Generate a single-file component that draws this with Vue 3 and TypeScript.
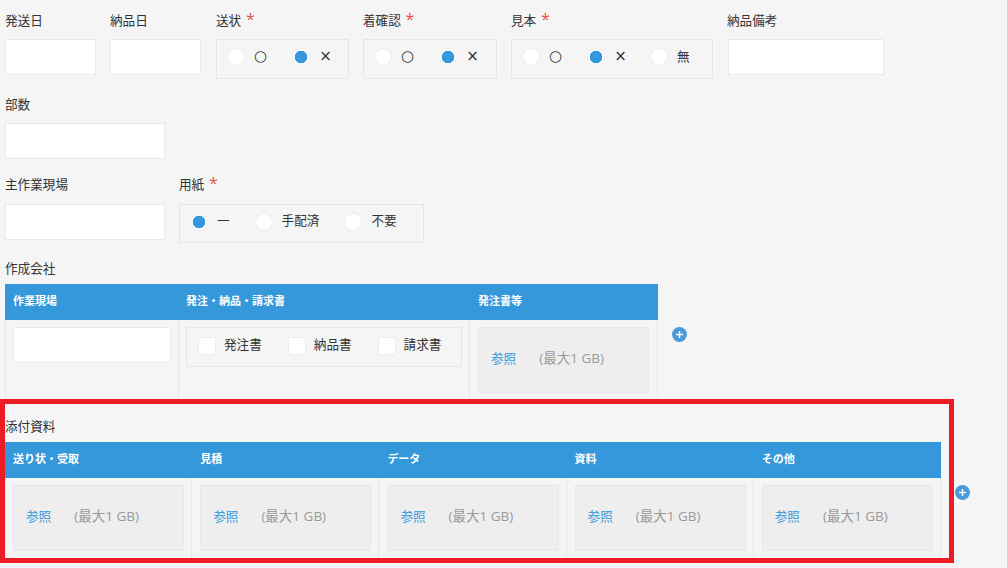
<script setup lang="ts">
interface RadioGroup {
  label: string
  name: string
  options: string[]
  selected: string
}

const topGroups: RadioGroup[] = [
  { label: '送状', name: 'r1', options: ['○', '×'], selected: '×' },
  { label: '着確認', name: 'r2', options: ['○', '×'], selected: '×' },
  { label: '見本', name: 'r3', options: ['○', '×', '無'], selected: '×' },
]
const paper = ['一', '手配済', '不要']
const docs = ['発注書', '納品書', '請求書']
const attachments = ['送り状・受取', '見積', 'データ', '資料', 'その他']
const isSymbol = (o: string): boolean => o === '○' || o === '×'
</script>

<template>
  <div class="page">
    <div class="row-top">
      <div class="field">
        <div class="label">発送日</div>
        <input class="text" type="text" />
      </div>
      <div class="field">
        <div class="label">納品日</div>
        <input class="text narrow" type="text" />
      </div>
      <div v-for="g in topGroups" :key="g.name" class="field">
        <div class="label">{{ g.label }} <span class="req">*</span></div>
        <div class="choice">
          <label v-for="o in g.options" :key="o" class="opt">
            <input class="radio" type="radio" :name="g.name" :checked="o === g.selected" />
            <span class="opt-text" :class="{ sym: isSymbol(o) }">{{ o }}</span>
          </label>
        </div>
      </div>
      <div class="field">
        <div class="label">納品備考</div>
        <input class="text" type="text" />
      </div>
    </div>

    <div class="field w160 sec-parts">
      <div class="label">部数</div>
      <input class="text" type="text" />
    </div>

    <div class="row-site">
      <div class="field w160">
        <div class="label lower">主作業現場</div>
        <input class="text" type="text" />
      </div>
      <div class="field w245">
        <div class="label lower">用紙 <span class="req">*</span></div>
        <div class="choice paper">
          <label v-for="o in paper" :key="o" class="opt">
            <input class="radio" type="radio" name="paper" :checked="o === '一'" />
            <span class="opt-text">{{ o }}</span>
          </label>
        </div>
      </div>
    </div>

    <div class="label section-label first">作成会社</div>
    <div class="table-row">
      <div class="table t1">
        <div class="th">作業現場</div>
        <div class="th">発注・納品・請求書</div>
        <div class="th">発注書等</div>
        <div class="td first-col"><input class="text" type="text" /></div>
        <div class="td mid-col">
          <div class="choice checks">
            <label v-for="d in docs" :key="d" class="opt">
              <input class="check" type="checkbox" />
              <span class="opt-text">{{ d }}</span>
            </label>
          </div>
        </div>
        <div class="td last-col">
          <div class="file"><a class="browse">参照</a><span class="limit">(最大1 GB)</span></div>
        </div>
      </div>
      <button class="plus" type="button" aria-label="追加">
        <svg viewBox="0 0 15 15" width="15" height="15"><circle cx="7.5" cy="7.5" r="7.5" fill="#4a9ad8" /><path d="M7.5 4v7M4 7.5h7" stroke="#fff" stroke-width="1.4" /></svg>
      </button>
    </div>

    <div class="label section-label second">添付資料</div>
    <div class="table-row">
      <div class="table t2">
        <div v-for="a in attachments" :key="a" class="th">{{ a }}</div>
        <div v-for="(a, i) in attachments" :key="a + 'c'" class="td" :class="{ 'first-col': i === 0 }">
          <div class="file"><a class="browse">参照</a><span class="limit">(最大1 GB)</span></div>
        </div>
      </div>
      <button class="plus" type="button" aria-label="追加">
        <svg viewBox="0 0 15 15" width="15" height="15"><circle cx="7.5" cy="7.5" r="7.5" fill="#4a9ad8" /><path d="M7.5 4v7M4 7.5h7" stroke="#fff" stroke-width="1.4" /></svg>
      </button>
    </div>

    <div class="highlight"></div>
  </div>
</template>

<style>
html,
body {
  margin: 0;
  background: #f5f5f5;
}
</style>

<style scoped>
.page {
  position: relative;
  box-sizing: border-box;
  height: 568px;
  overflow: hidden;
  padding: 13px 0 0 5px;
  background: #f5f5f5;
  color: #333;
  font-family: "Noto Sans CJK JP", "Open Sans", sans-serif;
  font-size: 12.6px;
}
.row-top {
  display: grid;
  grid-template-columns: 91px 92px 133px 134px 202px 157px;
  column-gap: 14px;
  height: 66px;
}
.field {
  display: flex;
  flex-direction: column;
  align-items: stretch;
}
.w160 {
  width: 160px;
}
.w245 {
  width: 245px;
}
.label {
  height: 14px;
  line-height: 14px;
  margin-bottom: 12px;
  white-space: nowrap;
}
.label.lower {
  margin-bottom: 13px;
}
.req {
  color: #e0554e;
  font-family: "Open Sans", sans-serif;
  font-size: 16px;
  line-height: 1px;
  margin-left: 2px;
}
.sec-parts {
  margin-top: 18px;
}
.row-site {
  display: flex;
  gap: 14px;
  margin-top: 18px;
}
.text {
  box-sizing: border-box;
  display: block;
  width: 100%;
  height: 36px;
  margin: 0;
  padding: 0;
  background: #fff;
  border: 1px solid #e9e9e9;
  outline: none;
}
.text.narrow {
  width: 91px;
}
.row-top .field:last-child .text {
  margin-left: 1px;
  width: 156px;
}
.choice {
  box-sizing: border-box;
  display: flex;
  align-items: center;
  gap: 25px;
  height: 40px;
  padding: 0 0 4px 10px;
  border: 1px solid #e6e6e6;
}
.paper {
  height: 39px;
  padding-bottom: 4px;
}
.opt {
  display: flex;
  align-items: center;
  gap: 9px;
}
.opt:nth-child(3) .sym,
.opt:has(.sym) + .opt:has(.sym) + .opt {
  margin-left: -2px;
}
.opt-text {
  line-height: 14px;
  margin-top: -3px;
}
.sym {
  width: 13px;
  text-align: center;
  font-family: "DejaVu Sans", sans-serif;
  font-size: 15px;
  margin-top: -3px;
}
.radio {
  box-sizing: border-box;
  appearance: none;
  width: 18px;
  height: 18px;
  margin: 0;
  border: 1px solid #ededed;
  border-radius: 50%;
  background: #fff;
}
.radio:checked {
  background: radial-gradient(circle, #3498db 0 6px, #fff 6.6px);
}
.section-label {
  margin-bottom: 9px;
}
.first {
  margin-top: 18px;
}
.second {
  margin-top: 19px;
}
.table-row {
  display: flex;
  align-items: flex-start;
}
.table {
  display: grid;
  grid-template-rows: 36px 80px;
}
.t1 {
  grid-template-columns: 174px 291px 188px;
}
.t2 {
  grid-template-columns: repeat(5, 187.2px);
}
.th {
  display: flex;
  align-items: center;
  padding: 0 0 5px 8px;
  background: #3498db;
  color: #fff;
  font-size: 11px;
  font-weight: 700;
  white-space: nowrap;
}
.t1 .th:nth-child(2) {
  padding-left: 7px;
}
.t1 .th:nth-child(3) {
  padding-left: 8px;
}
.td {
  box-sizing: border-box;
  padding: 7px 7px 0 8px;
  border-right: 1px solid #e8e8e8;
}
.first-col {
  padding-left: 7px;
  border-left: 1px solid #e8e8e8;
}
.mid-col {
  padding-left: 7px;
}
.last-col {
  padding-right: 8px;
}
.checks {
  gap: 26px;
  padding-bottom: 3px;
  padding-left: 11px;
}
.checks .opt-text {
  margin-top: -4px;
}
.opt:has(.check) {
  gap: 8px;
}
.check {
  box-sizing: border-box;
  appearance: none;
  width: 18px;
  height: 18px;
  margin: 0;
  background: #fff;
  border: 1px solid #ececec;
}
.file {
  box-sizing: border-box;
  display: flex;
  align-items: center;
  gap: 23px;
  height: 66px;
  padding: 0 0 6px 12px;
  background: #eee;
  border: 1px solid #e8e8e8;
  white-space: nowrap;
}
.browse {
  color: #3498db;
}
.limit {
  color: #999;
  font-family: "Open Sans", "Noto Sans CJK JP", sans-serif;
  font-size: 13.5px;
}
.plus {
  display: block;
  width: 15px;
  height: 15px;
  margin: 43px 0 0 14px;
  padding: 0;
  border: 0;
  background: none;
}
.plus svg {
  display: block;
}
.highlight {
  position: absolute;
  left: 0;
  top: 399px;
  box-sizing: border-box;
  width: 954px;
  height: 164px;
  border: 5px solid #ed1c24;
  pointer-events: none;
}
</style>
